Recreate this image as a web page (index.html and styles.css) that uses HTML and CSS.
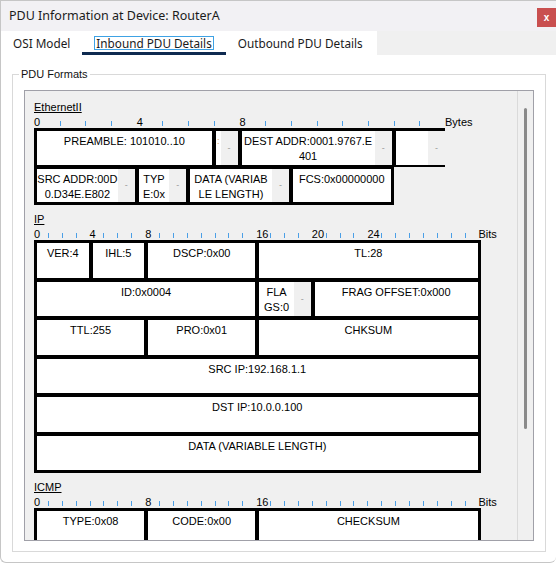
FILE: index.html
```html
<!DOCTYPE html>
<html lang="en">
<head>
    <meta charset="UTF-8">
    <title>PDU Information at Device: RouterA</title>
    <link rel="stylesheet" href="styles.css">
</head>
<body>
<div class="window">
    <div class="titlebar">
        <span class="title">PDU Information at Device: RouterA</span>
        <span class="close">x</span>
    </div>

    <div class="tabbar">
        <div class="tabs">
            <span class="tab first">OSI Model</span>
            <span class="tab active"><span class="focus">Inbound PDU Details</span></span>
            <span class="tab">Outbound PDU Details</span>
        </div>
    </div>

    <div class="body">
        <fieldset class="group">
            <legend>PDU Formats</legend>
            <div class="pane">
                <div class="pane-content">

                    <!-- Ethernet II, laid out in bytes -->
                    <div class="section">
                        <div class="proto">EthernetII</div>
                        <div class="ruler bytes">
                            <b>0</b><i></i><i></i><i></i><b>4</b><i></i><i></i><i></i><b>8</b><i></i><i></i><i></i><i></i><i></i><i></i><i></i><b>Bytes</b>
                        </div>
                        <div class="frame bytes">
                            <div class="f w7 r1 c1"><div class="txt">PREAMBLE: 101010..10</div></div>
                            <div class="f w1 r1"><div class="txt clip">:</div><div class="more">-</div></div>
                            <div class="f w6 r1"><div class="txt">DEST ADDR:0001.9767.E<br>401</div><div class="more">-</div></div>
                            <div class="f w2 r1 open"><div class="txt"></div><div class="more">-</div></div>

                            <div class="f w4 r2 c1"><div class="txt">SRC ADDR:00D<br>0.D34E.E802</div><div class="more">-</div></div>
                            <div class="f w2 r2"><div class="txt">TYP<br>E:0x</div><div class="more">-</div></div>
                            <div class="f w4 r2"><div class="txt">DATA (VARIAB<br>LE LENGTH)</div><div class="more">-</div></div>
                            <div class="f w4 r2 end"><div class="txt">FCS:0x00000000</div></div>
                        </div>
                    </div>

                    <!-- IPv4 header, laid out in bits -->
                    <div class="section">
                        <div class="proto">IP</div>
                        <div class="ruler bits">
                            <b>0</b><i></i><i></i><i></i><b>4</b><i></i><i></i><i></i><b>8</b><i></i><i></i><i></i><i></i><i></i><i></i><i></i><b>16</b><i></i><i></i><i></i><b>20</b><i></i><i></i><i></i><b>24</b><i></i><i></i><i></i><i></i><i></i><i></i><i></i><b>Bits</b>
                        </div>
                        <div class="frame bits">
                            <div class="f w4"><div class="txt">VER:4</div></div>
                            <div class="f w4"><div class="txt">IHL:5</div></div>
                            <div class="f w8"><div class="txt">DSCP:0x00</div></div>
                            <div class="f w16"><div class="txt">TL:28</div></div>

                            <div class="f w16"><div class="txt">ID:0x0004</div></div>
                            <div class="f w4"><div class="txt">FLA<br>GS:0</div><div class="more">-</div></div>
                            <div class="f w12"><div class="txt">FRAG OFFSET:0x000</div></div>

                            <div class="f w8"><div class="txt">TTL:255</div></div>
                            <div class="f w8"><div class="txt">PRO:0x01</div></div>
                            <div class="f w16"><div class="txt">CHKSUM</div></div>

                            <div class="f w32"><div class="txt">SRC IP:192.168.1.1</div></div>
                            <div class="f w32"><div class="txt">DST IP:10.0.0.100</div></div>
                            <div class="f w32"><div class="txt">DATA (VARIABLE LENGTH)</div></div>
                        </div>
                    </div>

                    <!-- ICMP header -->
                    <div class="section">
                        <div class="proto">ICMP</div>
                        <div class="ruler bits">
                            <b>0</b><i></i><i></i><i></i><i></i><i></i><i></i><i></i><b>8</b><i></i><i></i><i></i><i></i><i></i><i></i><i></i><b>16</b><i></i><i></i><i></i><i></i><i></i><i></i><i></i><i></i><i></i><i></i><i></i><i></i><i></i><i></i><i></i><b>Bits</b>
                        </div>
                        <div class="frame bits">
                            <div class="f w8"><div class="txt">TYPE:0x08</div></div>
                            <div class="f w8"><div class="txt">CODE:0x00</div></div>
                            <div class="f w16"><div class="txt">CHECKSUM</div></div>
                        </div>
                    </div>

                </div>
                <div class="vscroll"><div class="thumb"></div></div>
            </div>
        </fieldset>
    </div>
</div>
</body>
</html>
```

FILE: styles.css
```css
* {
    box-sizing: border-box;
}

body {
    margin: 0;
    background: #fff;
}

.window {
    width: 556px;
    height: 563px;
    display: flex;
    flex-direction: column;
    border: 1px solid #c6c6c6;
    border-right: 0;
    border-radius: 0 0 6px 6px;
    background: #fff;
    overflow: hidden;
    font-family: "Noto Sans", "Open Sans", sans-serif;
    color: #1b1b1b;
}

/* title bar */
.titlebar {
    height: 30px;
    flex: none;
    display: flex;
    padding-left: 8px;
    background: #f2f1f4;
    font-size: 12.5px;
}

.title {
    flex: 1;
    line-height: 29px;
}

.close {
    width: 19px;
    height: 19px;
    margin-top: 7px;
    display: flex;
    align-items: center;
    justify-content: center;
    background: #c94f4f;
    color: #fff;
    font: bold 10px "Liberation Sans", sans-serif;
}

/* tabs */
.tabbar {
    height: 24px;
    flex: none;
    background: #f0f0f0;
}

.tabs {
    display: inline-flex;
    height: 100%;
    background: #fff;
    padding-right: 2px;
}

.tab {
    display: flex;
    align-items: center;
    padding: 0 12px;
    font-size: 11.75px;
}

.tab.first {
    padding-left: 12px;
}

.tab.active {
    box-shadow: inset 0 -3px #0e2a50;
}

.focus {
    border: 1px solid #3ea2e4;
    padding: 0 1px;
    line-height: 12px;
}

/* group box */
.body {
    flex: 1;
    padding: 12px 10px 0 11px;
}

.group {
    margin: 0;
    padding: 9px 11px 10px;
    border: 1px solid #d9d9d9;
}

.group legend {
    margin-left: -5px;
    padding: 0 2px;
    font: 11px/14px "Liberation Sans", Arial, sans-serif;
    color: #111;
}

.pane {
    height: 451px;
    display: flex;
    border: 1px solid #a0a0a8;
    background: #f0f0f0;
}

.pane-content {
    flex: 1;
    overflow: hidden;
    padding: 9px 0 0 9px;
    font: 11px/14px "Liberation Sans", Arial, sans-serif;
    color: #000;
}

.vscroll {
    width: 16px;
    flex: none;
    border-left: 1px solid #dadada;
}

.thumb {
    width: 3px;
    height: 321px;
    margin: 17px auto 0;
    border-radius: 2px;
    background: #8a8a8a;
}

/* protocol sections */
.section + .section {
    margin-top: 7px;
}

.proto {
    height: 14px;
    text-decoration: underline;
    text-underline-offset: 1px;
}

.ruler {
    display: grid;
    grid-template-rows: 14px;
    height: 14px;
}

.ruler b {
    margin-top: 1px;
    font-weight: normal;
    white-space: nowrap;
}

.ruler i {
    width: 1px;
    height: 5px;
    margin-top: 7px;
    background: #4b9fe6;
}

.ruler.bytes {
    grid-template-columns: repeat(16, 25.7px) auto;
}

.ruler.bits {
    grid-template-columns: repeat(32, 13.9px) auto;
}

/* field frames */
.frame {
    display: grid;
    width: max-content;
    grid-auto-rows: 38.5px;
}

.frame.bytes {
    grid-template-columns: repeat(16, 25.7px);
}

.frame.bits {
    grid-template-columns: repeat(32, 13.9px);
    border: 1px solid #000;
}

.f {
    display: flex;
    border: 2px solid #000;
    background: #fff;
    overflow: hidden;
}

.frame.bytes .r1 { border-top-width: 3px; }
.frame.bytes .r2 { border-bottom-width: 3px; }
.frame.bytes .c1 { border-left-width: 3px; }
.frame.bytes .end { border-right-width: 3px; }
.frame.bytes .open { border-right: 0; }

.w1 { grid-column: span 1; }
.w2 { grid-column: span 2; }
.w4 { grid-column: span 4; }
.w6 { grid-column: span 6; }
.w7 { grid-column: span 7; }
.w8 { grid-column: span 8; }
.w12 { grid-column: span 12; }
.w16 { grid-column: span 16; }
.w32 { grid-column: span 32; }

.txt {
    flex: 1;
    min-width: 0;
    padding-top: 3px;
    line-height: 15px;
    text-align: center;
    white-space: nowrap;
    color: #000;
}

.txt.clip {
    color: #d2a060;
    font-size: 9px;
}

.more {
    width: 17px;
    flex: none;
    display: flex;
    align-items: center;
    justify-content: center;
    background: #f0f0f0;
    color: #9a9a9a;
    font-size: 9px;
}
```
